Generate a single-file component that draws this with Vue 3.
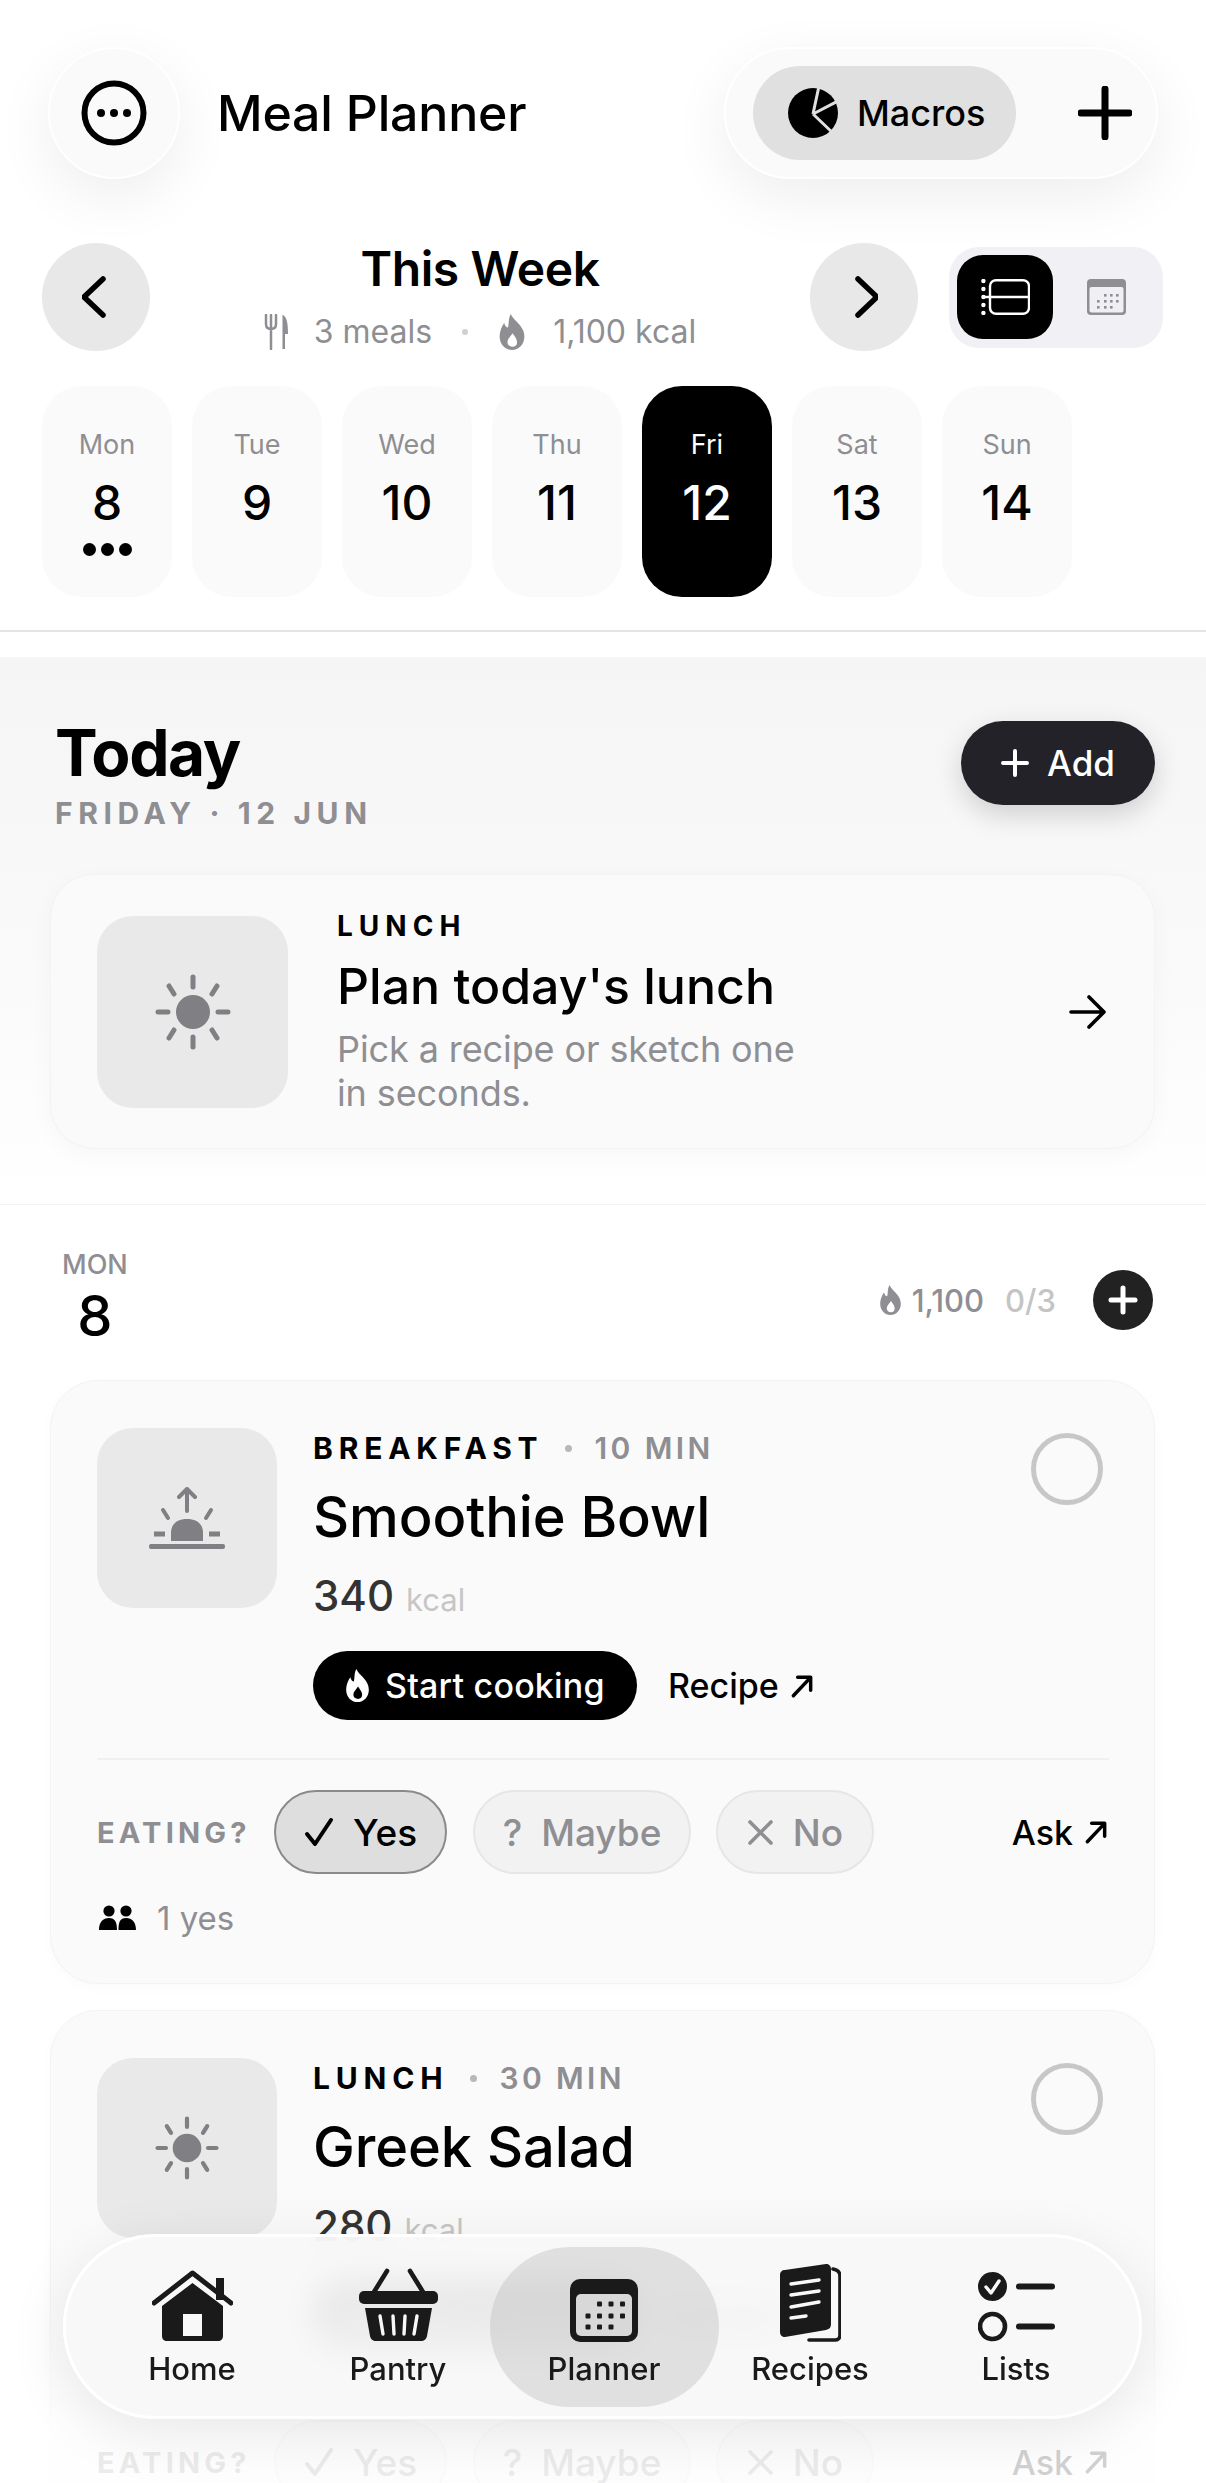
<script setup>
const days = [
  { name: 'Mon', num: 8, dots: true },
  { name: 'Tue', num: 9 },
  { name: 'Wed', num: 10 },
  { name: 'Thu', num: 11 },
  { name: 'Fri', num: 12, active: true },
  { name: 'Sat', num: 13 },
  { name: 'Sun', num: 14 },
]

const meals = [
  { type: 'BREAKFAST', time: '10 MIN', title: 'Smoothie Bowl', kcal: 340, icon: 'sunrise', eating: true },
  { type: 'LUNCH', time: '30 MIN', title: 'Greek Salad', kcal: 280, icon: 'sun', eating: false },
]

const tabs = ['Home', 'Pantry', 'Planner', 'Recipes', 'Lists']
const plannerDots = [
  [29.5, 25], [41, 25], [52.5, 25],
  [18, 37], [29.5, 37], [41, 37], [52.5, 37],
  [18, 48], [29.5, 48], [41, 48],
]
const smallCalDots = [
  [17, 15], [23, 15], [29, 15],
  [10, 21], [17, 21], [23, 21], [29, 21],
  [10, 27], [17, 27], [23, 27],
]
</script>

<template>
  <div class="page">
    <svg class="defs" width="0" height="0">
      <symbol id="flame" viewBox="0 0 24 32">
        <path fill="currentColor" fill-rule="evenodd" d="M11 0C13 6 23 10 23 20C23 27 18 32 12 32C6 32 1 27 1 20C1 15 3 11 5 8C6 11 7 12 8.5 12C9.5 8 8.5 4 11 0ZM12.5 17C10.5 20 8 22 8 25C8 27.5 10 29 12.5 29C15 29 16.5 27.5 16.5 25C16.5 22 14.5 20 12.5 17Z"/>
      </symbol>
      <symbol id="sun" viewBox="0 0 76 76">
        <circle cx="38" cy="38" r="17" fill="currentColor"/>
        <g stroke="currentColor" stroke-width="5" stroke-linecap="round">
          <path d="M38 3V13M38 63V73M3 38H13M63 38H73M14 12L19 20M62 12L57 20M14 64L19 56M62 64L57 56"/>
        </g>
      </symbol>
      <symbol id="sunrise" viewBox="0 0 76 62">
        <path fill="currentColor" d="M22 54V46C22 37 28 32 38 32C48 32 54 37 54 46V54Z"/>
        <g fill="none" stroke="currentColor" stroke-width="4" stroke-linecap="round" stroke-linejoin="round">
          <path d="M38 24V3M30 10L38 2L46 10"/>
          <path d="M14 23L19 31M62 23L57 31"/>
        </g>
        <path stroke="currentColor" stroke-width="5" d="M5 47H16M60 47H71"/>
        <rect y="57" x="0" width="76" height="5" rx="2" fill="currentColor"/>
      </symbol>
      <symbol id="diag" viewBox="0 0 24 24">
        <path fill="none" stroke="currentColor" stroke-width="3.2" stroke-linecap="round" stroke-linejoin="round" d="M4 21L20 4M8 4H20V16"/>
      </symbol>
    </svg>

    <header class="topbar">
      <div class="glass round">
        <svg width="66" height="66" viewBox="0 0 66 66">
          <circle cx="33" cy="33" r="29.5" fill="none" stroke="#000" stroke-width="6"/>
          <circle cx="20" cy="33" r="4" /><circle cx="33" cy="33" r="4" /><circle cx="46" cy="33" r="4" />
        </svg>
      </div>
      <h1 class="app-title">Meal Planner</h1>
      <div class="glass actions">
        <div class="macros">
          <svg width="50" height="50" viewBox="0 0 50 50">
            <circle cx="25" cy="25" r="25" />
            <path d="M25 26L31 -2M25 26L52 12M25 26L47 47" fill="none" stroke="#e0e0e0" stroke-width="3"/>
          </svg>
          <span>Macros</span>
        </div>
        <svg class="plus" width="54" height="54" viewBox="0 0 54 54">
          <path d="M27 3V51M3 27H51" stroke="#000" stroke-width="7" stroke-linecap="round"/>
        </svg>
      </div>
    </header>

    <div class="week">
      <button class="nav-btn">
        <svg width="28" height="42" viewBox="0 0 28 42"><path d="M21 3L2 21L21 39" fill="none" stroke="#000" stroke-width="5.5" stroke-linecap="round" stroke-linejoin="round"/></svg>
      </button>
      <div class="week-center">
        <div class="week-title">This Week</div>
        <div class="week-meta">
          <svg width="24" height="36" viewBox="0 0 24 36">
            <path fill="none" stroke="#8e8e93" stroke-width="2.5" stroke-linecap="round" d="M2 1V10C2 14 5 15 7 15C9 15 12 14 12 10V1M7 1V35"/>
            <path fill="#8e8e93" d="M19 1C23 3 24 10 24 20H21V35H18.5V1Z"/>
          </svg>
          <span class="meals-count">3 meals</span>
          <i class="meta-dot"></i>
          <svg class="meta-flame" width="28" height="36"><use href="#flame"/></svg>
          <span>1,100 kcal</span>
        </div>
      </div>
      <button class="nav-btn">
        <svg width="28" height="42" viewBox="0 0 28 42"><path d="M8 3L27 21L8 39" fill="none" stroke="#000" stroke-width="5.5" stroke-linecap="round" stroke-linejoin="round"/></svg>
      </button>
      <div class="view-toggle">
        <div class="view-on">
          <svg width="49" height="36" viewBox="0 0 49 36">
            <rect x="9" y="1.2" width="39" height="33.6" rx="6" fill="none" stroke="#fff" stroke-width="2.4"/>
            <path d="M2 18H48" stroke="#fff" stroke-width="2.4"/>
            <g fill="#fff"><circle cx="2.4" cy="2" r="2.2"/><circle cx="2.4" cy="10" r="2.2"/><circle cx="2.4" cy="18" r="2.2"/><circle cx="2.4" cy="26" r="2.2"/><circle cx="2.4" cy="34" r="2.2"/></g>
          </svg>
        </div>
        <div class="view-off">
          <svg width="39" height="36" viewBox="0 0 39 36">
            <rect width="39" height="36" rx="4" fill="#8e8e93"/>
            <rect x="2.5" y="8" width="34" height="25.5" rx="2" fill="#f0f0f4"/>
            <rect v-for="(d, i) in smallCalDots" :key="i" :x="d[0]" :y="d[1]" width="2.6" height="2.6" fill="#8e8e93"/>
          </svg>
        </div>
      </div>
    </div>

    <div class="days">
      <div v-for="d in days" :key="d.name" class="day" :class="{ active: d.active }">
        <span class="day-name">{{ d.name }}</span>
        <span class="day-num">{{ d.num }}</span>
        <span v-if="d.dots" class="day-dots"><i></i><i></i><i></i></span>
      </div>
    </div>

    <div class="rule"></div>

    <section class="today">
      <div class="today-head">
        <div>
          <h2 class="today-title">Today</h2>
          <div class="today-date">FRIDAY · 12 JUN</div>
        </div>
        <button class="add-btn">
          <svg width="28" height="28" viewBox="0 0 28 28"><path d="M14 2V26M2 14H26" stroke="#fff" stroke-width="4" stroke-linecap="round"/></svg>
          Add
        </button>
      </div>
      <div class="plan-card">
        <div class="plan-icon"><svg width="76" height="76"><use href="#sun"/></svg></div>
        <div class="plan-body">
          <div class="plan-kicker">LUNCH</div>
          <div class="plan-title">Plan today's lunch</div>
          <div class="plan-desc">Pick a recipe or sketch one<br>in seconds.</div>
        </div>
        <svg class="plan-arrow" width="38" height="34" viewBox="0 0 38 34">
          <path d="M2 17H35M20 2L35 17L20 32" fill="none" stroke="#000" stroke-width="3.6" stroke-linecap="round" stroke-linejoin="round"/>
        </svg>
      </div>
    </section>

    <div class="day-head">
      <div class="day-head-date">
        <span class="dh-name">MON</span>
        <span class="dh-num">8</span>
      </div>
      <div class="day-head-side">
        <svg class="dh-flame" width="23" height="30"><use href="#flame"/></svg>
        <span class="dh-kcal">1,100</span>
        <span class="dh-count">0/3</span>
        <span class="dh-add">
          <svg width="30" height="30" viewBox="0 0 30 30"><path d="M15 3V27M3 15H27" stroke="#fff" stroke-width="5" stroke-linecap="round"/></svg>
        </span>
      </div>
    </div>

    <article v-for="m in meals" :key="m.title" class="meal">
      <div class="meal-top">
        <div class="meal-icon">
          <svg v-if="m.icon === 'sun'" width="64" height="64"><use href="#sun"/></svg>
          <svg v-else width="76" height="62"><use href="#sunrise"/></svg>
        </div>
        <div class="meal-body">
          <div class="meal-meta">
            <span class="meal-type">{{ m.type }}</span>
            <i class="meal-dot"></i>
            <span class="meal-time">{{ m.time }}</span>
          </div>
          <div class="meal-title">{{ m.title }}</div>
          <div class="meal-kcal"><b>{{ m.kcal }}</b><span>kcal</span></div>
          <div class="meal-actions">
            <button class="cook-btn">
              <svg width="25" height="33"><use href="#flame"/></svg>
              Start cooking
            </button>
            <span class="link">Recipe <svg width="26" height="26"><use href="#diag"/></svg></span>
          </div>
        </div>
        <div class="meal-check"></div>
      </div>
      <div class="meal-rule"></div>
      <div class="eating">
        <span class="eating-label">EATING?</span>
        <span class="chip chip-yes" :class="{ 'chip-on': m.eating }">
          <svg width="30" height="30" viewBox="0 0 30 30"><path d="M3 17L11 27L27 3" fill="none" stroke="currentColor" stroke-width="4" stroke-linecap="round" stroke-linejoin="round"/></svg>
          Yes
        </span>
        <span class="chip chip-maybe"><span class="q">?</span> Maybe</span>
        <span class="chip chip-no">
          <svg width="27" height="27" viewBox="0 0 27 27"><path d="M3 3L24 24M24 3L3 24" fill="none" stroke="#8e8e93" stroke-width="3.6" stroke-linecap="round"/></svg>
          No
        </span>
        <span class="link ask">Ask <svg width="26" height="26"><use href="#diag"/></svg></span>
      </div>
      <div v-if="m.eating" class="votes">
        <svg width="37" height="26" viewBox="0 0 37 26">
          <circle cx="10" cy="6" r="5.6"/><circle cx="27" cy="6" r="5.6"/>
          <path d="M0 25C0 17 4 13 10 13C16 13 18 17 18 25ZM19.5 25C19.5 17 21 13 27 13C33 13 37 17 37 25Z"/>
        </svg>
        <span>1 yes</span>
      </div>
    </article>

    <div class="fade"></div>

    <nav class="tabbar">
      <div v-for="t in tabs" :key="t" class="tab" :class="{ current: t === 'Planner' }">
        <svg v-if="t === 'Home'" width="81" height="72" viewBox="0 0 81 72">
          <path d="M64 8H72V30H64Z" fill="#1a1a1a"/>
          <path d="M2 33L40.5 3L79 33" fill="none" stroke="#1a1a1a" stroke-width="5" stroke-linecap="round" stroke-linejoin="round"/>
          <path fill="#1a1a1a" fill-rule="evenodd" d="M40.5 13L71 36V66C71 69 69 71 66 71H15C12 71 10 69 10 66V36ZM31 44V66H50V44Z"/>
        </svg>
        <svg v-else-if="t === 'Pantry'" width="79" height="74" viewBox="0 0 79 74">
          <path d="M28 3L15 24M51 3L64 24" fill="none" stroke="#1a1a1a" stroke-width="4.6" stroke-linecap="round"/>
          <rect y="23" width="79" height="13" rx="5" fill="#1a1a1a"/>
          <path fill="#1a1a1a" fill-rule="evenodd" d="M6 40H73L68 68C67.5 71 65 73 62 73H17C14 73 11.5 71 11 68Z"/>
          <path d="M21 48L24 66M34 48L35 66M46 48L45 66M58 48L55 66" stroke="#f8f8f8" stroke-width="3.4" stroke-linecap="round"/>
        </svg>
        <svg v-else-if="t === 'Planner'" width="68" height="63" viewBox="0 0 68 63">
          <rect width="68" height="63" rx="10" fill="#1a1a1a"/>
          <rect x="6" y="15" width="56" height="42" rx="5" fill="#d8d8d8"/>
          <rect v-for="(d, i) in plannerDots" :key="i" :x="d[0] - 2.5" :y="d[1] - 2.5" width="5" height="5" rx="1" fill="#1a1a1a"/>
        </svg>
        <svg v-else-if="t === 'Recipes'" width="62" height="78" viewBox="0 0 62 78">
          <path d="M54 5C59 6 61 8 61 12V71C61 74 59 76 56 76H30" fill="none" stroke="#1a1a1a" stroke-width="3.6" stroke-linecap="round"/>
          <path fill="#1a1a1a" d="M6 6L47 0C50 0 52 2 52 5V60C52 64 50 65 47 66L6 73C3 73 1 71 1 68V11C1 8 3 6 6 6Z"/>
          <path d="M12 20L40 16M12 31L40 27M12 43L40 38M12 54L27 52" stroke="#f8f8f8" stroke-width="3.4" stroke-linecap="round"/>
        </svg>
        <svg v-else width="77" height="70" viewBox="0 0 77 70">
          <circle cx="14.5" cy="14.5" r="14.5" fill="#1a1a1a"/>
          <path d="M8 15L13 21L21 9" fill="none" stroke="#f8f8f8" stroke-width="3.4" stroke-linecap="round" stroke-linejoin="round"/>
          <circle cx="14.5" cy="54.5" r="12.5" fill="none" stroke="#1a1a1a" stroke-width="4.6"/>
          <path d="M41 14.5H74M41 54.5H74" stroke="#1a1a1a" stroke-width="6" stroke-linecap="round"/>
        </svg>
        <span class="tab-label">{{ t }}</span>
      </div>
    </nav>
  </div>
</template>

<style>
html, body { margin: 0; background: #fff; }
</style>

<style scoped>
.page {
  position: relative;
  width: 1206px;
  height: 2483px;
  overflow: hidden;
  background: #fff;
  font-family: Inter, "Liberation Sans", sans-serif;
  color: #000;
}
.defs { position: absolute; }
h1, h2 { margin: 0; }
button { border: 0; padding: 0; font-family: inherit; color: inherit; }
i { display: block; }

.topbar {
  display: flex;
  align-items: center;
  padding: 47px 48px 0;
}
.glass {
  height: 132px;
  background: #fafafa;
  border: 2px solid #fff;
  box-sizing: border-box;
  box-shadow: 0 18px 60px rgba(0, 0, 0, 0.07);
}
.round {
  width: 132px;
  border-radius: 50%;
  display: flex;
  align-items: center;
  justify-content: center;
}
.app-title {
  flex: 1;
  margin-left: 37px;
  font-size: 50px;
  font-weight: 500;
  letter-spacing: -0.2px;
}
.actions {
  width: 434px;
  border-radius: 66px;
  display: flex;
  align-items: center;
  padding-left: 27px;
}
.macros {
  width: 263px;
  height: 94px;
  border-radius: 47px;
  background: #e0e0e0;
  display: flex;
  align-items: center;
  gap: 19px;
  padding-left: 35px;
  box-sizing: border-box;
  font-size: 36px;
  font-weight: 500;
}
.plus { margin-left: 62px; }

.week {
  display: flex;
  align-items: center;
  margin-top: 64px;
  padding: 0 43px 0 42px;
}
.nav-btn {
  width: 108px;
  height: 108px;
  border-radius: 50%;
  background: #e8e8e8;
  display: flex;
  align-items: center;
  justify-content: center;
}
.week-center { flex: 1; text-align: center; margin-top: -4px; }
.week-title {
  font-size: 48px;
  font-weight: 600;
  letter-spacing: -0.4px;
  line-height: 56px;
}
.week-meta {
  margin-top: 17px;
  display: flex;
  align-items: center;
  justify-content: center;
  font-size: 32px;
  color: #8e8e93;
  height: 36px;
}
.meals-count { margin-left: 26px; }
.meta-dot {
  width: 6px;
  height: 6px;
  border-radius: 50%;
  background: #d0d0d0;
  margin: 0 30px;
}
.meta-flame { margin-right: 27px; color: #8e8e93; }
.view-toggle {
  margin-left: 31px;
  width: 214px;
  height: 101px;
  border-radius: 30px;
  background: #f1f1f5;
  display: flex;
  align-items: center;
  padding-left: 8px;
  box-sizing: border-box;
}
.view-on {
  width: 96px;
  height: 84px;
  border-radius: 26px;
  background: #000;
  display: flex;
  align-items: center;
  justify-content: center;
}
.view-off { margin-left: 34px; display: flex; }

.days {
  display: flex;
  gap: 20px;
  margin-top: 35px;
  padding: 0 42px;
}
.day {
  position: relative;
  width: 130px;
  height: 211px;
  border-radius: 40px;
  background: #fafafa;
  display: flex;
  flex-direction: column;
  align-items: center;
  padding-top: 42px;
  box-sizing: border-box;
}
.day.active { background: #000; color: #fff; }
.day-name { font-size: 27px; color: #8e8e93; line-height: 34px; }
.active .day-name { color: #fff; }
.day-num { margin-top: 13px; font-size: 48px; font-weight: 500; line-height: 56px; }
.day-dots { display: flex; gap: 5px; margin-top: 12px; }
.day-dots i { width: 13px; height: 13px; border-radius: 50%; background: #000; }

.rule { height: 2px; margin-top: 33px; background: #e4e4e4; }

.today {
  margin-top: 25px;
  height: 548px;
  box-sizing: border-box;
  padding: 58px 51px 0 50px;
  background: linear-gradient(#f5f5f5, #fafafa 60%, #fff);
  border-bottom: 1px solid #f3f3f3;
}
.today-head {
  display: flex;
  justify-content: space-between;
  align-items: flex-start;
  padding-left: 5px;
}
.today-title {
  font-size: 64px;
  font-weight: 700;
  letter-spacing: -1.4px;
  line-height: 76px;
}
.today-date {
  margin-top: 4px;
  font-size: 30px;
  font-weight: 700;
  letter-spacing: 5.6px;
  color: #8e8e93;
}
.add-btn {
  margin-top: 6px;
  width: 194px;
  height: 84px;
  border-radius: 42px;
  background: #222228;
  color: #fff;
  font-size: 35px;
  font-weight: 500;
  display: flex;
  align-items: center;
  justify-content: center;
  gap: 18px;
  box-shadow: 0 10px 28px rgba(0, 0, 0, 0.16);
}
.plan-card {
  margin-top: 43px;
  height: 275px;
  border-radius: 44px;
  background: #fafafa;
  border: 1px solid #f3f3f3;
  box-sizing: border-box;
  box-shadow: 0 6px 24px rgba(0, 0, 0, 0.03);
  display: flex;
  align-items: center;
  padding: 0 47px 0 46px;
}
.plan-icon {
  width: 191px;
  height: 192px;
  border-radius: 36px;
  background: #e9e9e9;
  color: #808084;
  display: flex;
  align-items: center;
  justify-content: center;
}
.plan-body { flex: 1; margin-left: 49px; }
.plan-kicker { font-size: 28px; font-weight: 700; letter-spacing: 6px; line-height: 34px; }
.plan-title {
  margin-top: 13px;
  font-size: 50px;
  font-weight: 500;
  line-height: 60px;
}
.plan-desc { margin-top: 11px; font-size: 36px; line-height: 44px; color: #8e8e93; letter-spacing: -0.1px; }

.day-head {
  display: flex;
  justify-content: space-between;
  align-items: flex-start;
  padding: 43px 53px 0 62px;
  height: 175px;
  box-sizing: border-box;
}
.day-head-date {
  display: flex;
  flex-direction: column;
  align-items: center;
}
.dh-name { font-size: 27px; font-weight: 500; color: #8e8e93; line-height: 34px; }
.dh-num { margin-top: 2px; font-size: 56px; font-weight: 500; line-height: 64px; }
.day-head-side { display: flex; align-items: center; margin-top: 22px; }
.dh-flame { color: #8e8e93; }
.dh-kcal { margin-left: 10px; font-size: 31px; font-weight: 500; color: #8e8e93; }
.dh-count { margin-left: 21px; font-size: 31px; font-weight: 500; color: #c4c4c4; }
.dh-add {
  margin-left: 37px;
  width: 60px;
  height: 60px;
  border-radius: 50%;
  background: #222;
  display: flex;
  align-items: center;
  justify-content: center;
}

.meal {
  margin: 0 51px 26px 50px;
  height: 604px;
  box-sizing: border-box;
  padding: 47px 45px 0 46px;
  border-radius: 48px;
  background: #fafafa;
  border: 1px solid #f3f3f3;
  box-shadow: 0 4px 16px rgba(0, 0, 0, 0.02);
}
.meal-top { display: flex; align-items: flex-start; height: 292px; }
.meal-icon {
  width: 180px;
  height: 180px;
  border-radius: 36px;
  background: #e9e9e9;
  color: #808084;
  display: flex;
  align-items: center;
  justify-content: center;
  flex-shrink: 0;
}
.meal-body { flex: 1; margin-left: 36px; margin-top: 2px; }
.meal-meta { display: flex; align-items: center; height: 36px; }
.meal-type { font-size: 30px; font-weight: 700; letter-spacing: 5.8px; }
.meal-dot {
  width: 7px;
  height: 7px;
  border-radius: 50%;
  background: #b8b8b8;
  margin: 0 22px 0 22px;
}
.meal-time { font-size: 30px; font-weight: 600; letter-spacing: 3.4px; color: #8e8e93; }
.meal-title {
  margin-top: 17px;
  font-size: 56px;
  font-weight: 500;
  letter-spacing: -0.1px;
  line-height: 68px;
}
.meal-kcal { margin-top: 18px; display: flex; align-items: baseline; line-height: 54px; }
.meal-kcal b { font-size: 42px; font-weight: 500; color: #333; }
.meal-kcal span { margin-left: 12px; font-size: 31px; color: #c6c6c6; }
.meal-actions { display: flex; align-items: center; margin-top: 24px; }
.cook-btn {
  width: 324px;
  height: 69px;
  border-radius: 35px;
  background: #000;
  color: #fff;
  font-size: 34px;
  font-weight: 500;
  letter-spacing: 0.2px;
  display: flex;
  align-items: center;
  gap: 15px;
  padding-left: 32px;
  box-sizing: border-box;
}
.link {
  display: inline-flex;
  align-items: center;
  gap: 10px;
  font-size: 34px;
  font-weight: 500;
  color: #000;
}
.meal-actions .link { margin-left: 31px; }
.meal-check {
  width: 72px;
  height: 72px;
  border-radius: 50%;
  border: 5px solid #c7c7c7;
  box-sizing: border-box;
  margin: 5px 6px 0 0;
  flex-shrink: 0;
}
.meal-rule { height: 2px; margin-top: 38px; background: #f0f0f0; }
.eating { display: flex; align-items: center; margin-top: 30px; }
.eating-label {
  width: 177px;
  font-size: 29px;
  font-weight: 700;
  letter-spacing: 4.2px;
  color: #8e8e93;
}
.chip {
  height: 84px;
  border-radius: 42px;
  box-sizing: border-box;
  border: 2px solid #e6e6e6;
  background: #f2f2f2;
  color: #8e8e93;
  font-size: 37px;
  font-weight: 500;
  display: flex;
  align-items: center;
  justify-content: center;
  gap: 19px;
}
.chip-yes { width: 173px; }
.chip-on { border-color: #8a8a8a; background: #dedede; color: #000; }
.chip-maybe { width: 218px; margin-left: 26px; }
.chip-no { width: 158px; margin-left: 25px; }
.q { font-weight: 500; }
.ask { margin-left: auto; margin-right: 0; }
.votes {
  display: flex;
  align-items: center;
  gap: 21px;
  margin-top: 24px;
  padding-left: 2px;
  font-size: 33px;
  color: #8e8e93;
}

.fade {
  position: absolute;
  left: 0;
  right: 0;
  bottom: 0;
  height: 190px;
  background: linear-gradient(rgba(255, 255, 255, 0), rgba(255, 255, 255, 0.82) 70%);
}
.tabbar {
  position: absolute;
  left: 63px;
  top: 2234px;
  width: 1079px;
  height: 185px;
  box-sizing: border-box;
  border: 3px solid #fff;
  border-radius: 93px;
  background: rgba(248, 248, 248, 0.93);
  backdrop-filter: blur(16px);
  box-shadow: 0 14px 60px rgba(0, 0, 0, 0.09);
  display: grid;
  grid-template-columns: repeat(5, 206px);
  padding-left: 23px;
}
.tab {
  position: relative;
  display: flex;
  flex-direction: column;
  align-items: center;
  color: #1a1a1a;
}
.tab svg { position: absolute; bottom: 74px; }
.tab.current::before {
  content: "";
  position: absolute;
  left: -11px;
  right: -12px;
  top: 10px;
  bottom: 9px;
  border-radius: 80px;
  background: rgba(190, 190, 190, 0.42);
}
.tab-label {
  position: absolute;
  bottom: 27px;
  font-size: 31px;
  font-weight: 500;
  line-height: 40px;
}
</style>
